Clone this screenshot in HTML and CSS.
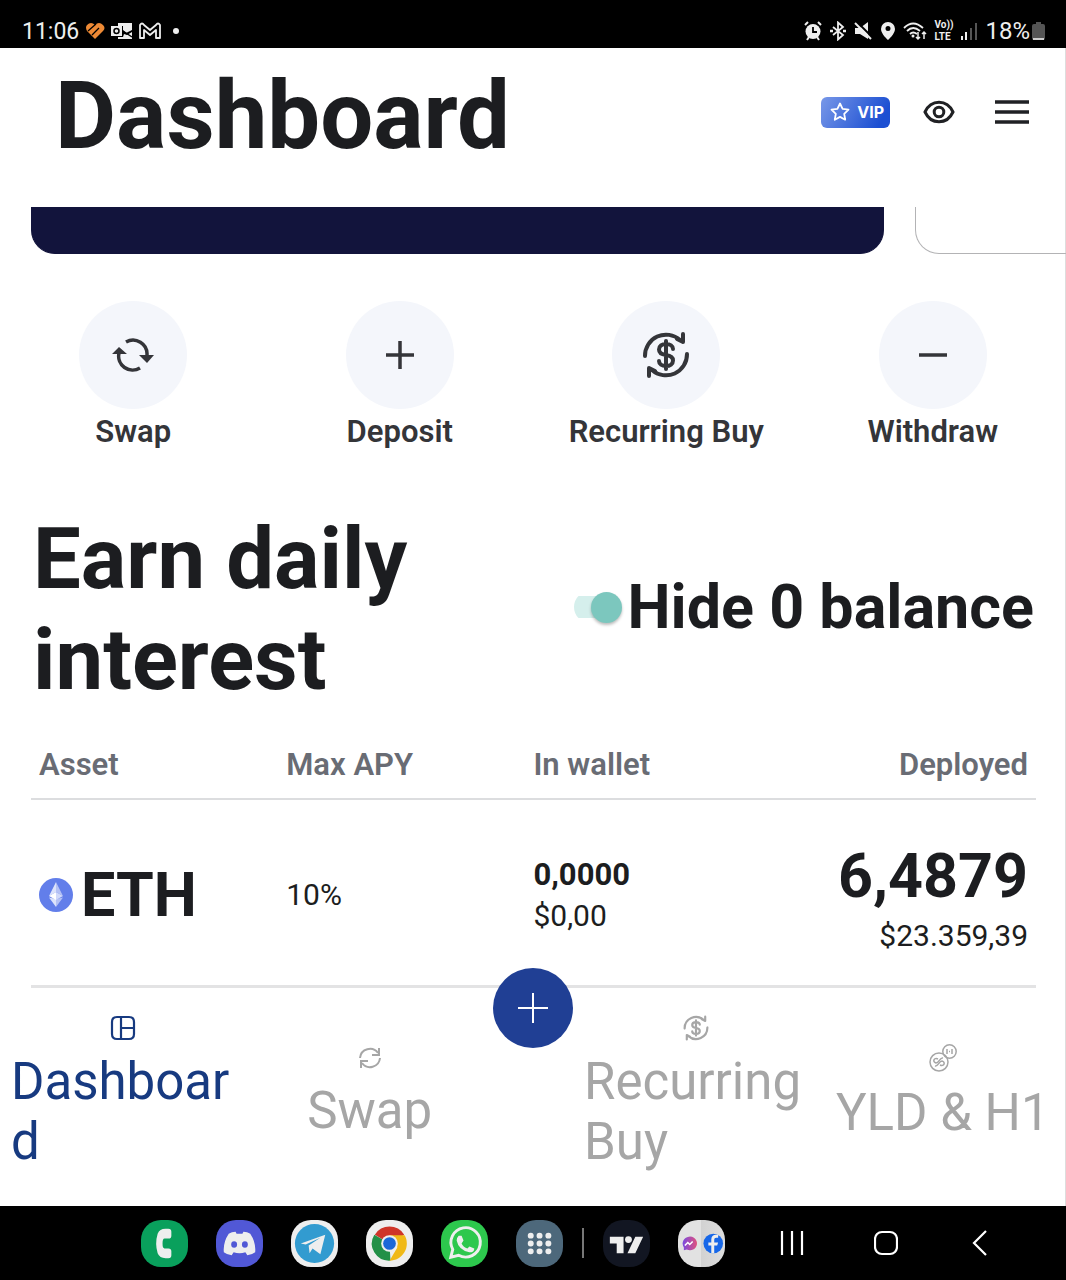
FILE: index.html
```html
<!DOCTYPE html>
<html lang="en">
<head>
<meta charset="utf-8">
<meta name="viewport" content="width=device-width, initial-scale=1">
<title>Dashboard</title>
<link rel="stylesheet" href="styles.css">
</head>
<body>
<svg class="defs" aria-hidden="true">
  <symbol id="recurring" viewBox="0 0 48 48">
    <g fill="none" stroke="currentColor" stroke-linecap="round" stroke-linejoin="round">
      <path d="M3 25A21 21 0 0 1 38 9M41 3v8l-6-3M45 23A21 21 0 0 1 10 39M7 45v-8l6 3"/>
      <path d="M31 18c0-3-3-5-7-5s-7 2-7 5.500 3 5 7 5.500 7 2 7 5.500-3 5.500-7 5.500-7-2-7-5M24 10v28"/>
    </g>
  </symbol>
</svg>

<div class="status">
  <div class="status-group">
    <span class="clock">11:06</span>
    <svg width="20" height="18" viewBox="0 0 20 18"><path fill="#ee8a35" d="M10 17L2 9Q0 5 2 3q4-4 8 0 4-4 8 0 3 3 0 6z"/><path d="M3 9l8-7M7 13l7-7" fill="none" stroke="#000" stroke-width="1.300"/></svg>
    <svg width="22" height="18" viewBox="0 0 22 18"><path fill="#eee" d="M7 1h14v7l-6 3-3-3V4H7zM0 4h11v10H0zM13 12l3 1 5-3v7H7v-2h5z"/><circle cx="5.500" cy="9" r="2.500" fill="none" stroke="#000" stroke-width="1.500"/><path d="M12 9l9 6" stroke="#000" stroke-width="1.500"/></svg>
    <svg width="22" height="18" viewBox="0 0 22 18"><path fill="none" stroke="#eee" stroke-width="1.800" stroke-linejoin="round" d="M1 16V3q2-3 4 0l6 5 6-5q2-3 4 0v13h-4V8l-6 5-6-5v8z"/></svg>
    <span class="dot"></span>
  </div>
  <div class="status-group signals">
    <svg width="18" height="20" viewBox="0 0 18 20"><circle cx="9" cy="10.500" r="7.500" fill="#eee"/><path d="M1 4l3-3M17 4l-3-3M3 19l2-3M15 19l-2-3" stroke="#eee" stroke-width="2"/><path d="M9 6v5h4" fill="none" stroke="#000" stroke-width="1.800"/></svg>
    <svg width="18" height="20" viewBox="0 0 18 20"><path d="M4 6l10 8-5 4.500v-17L14 6 4 14" fill="none" stroke="#eee" stroke-width="1.800"/><path d="M1 10h3M14 10h3" stroke="#eee" stroke-width="2.500"/></svg>
    <svg width="19" height="20" viewBox="0 0 19 20"><path fill="#eee" d="M1 7h5l8-6v17l-8-5H1z"/><path d="M3 1l16 16" stroke="#000" stroke-width="2"/><path d="M1 2l16 16" stroke="#eee" stroke-width="2"/></svg>
    <svg width="16" height="20" viewBox="0 0 16 20"><path fill="#eee" fill-rule="evenodd" d="M8 1a7 7 0 0 1 7 7c0 5-7 11-7 11S1 13 1 8a7 7 0 0 1 7-7zm0 4a2.500 2.500 0 1 0 0 5 2.500 2.500 0 0 0 0-5z"/></svg>
    <svg width="24" height="20" viewBox="0 0 24 20"><g fill="none" stroke="#eee" stroke-width="1.800"><path d="M1 7q9-9 19 0M4 10q6-6 13 0M7 13q3-3 7 0"/><path stroke-width="1.500" d="M15 11v7m-2-2l2 2 2-2M21 18v-7m-2 2l2-2 2 2"/></g><circle cx="10" cy="15" r="1.500" fill="#eee"/></svg>
    <span class="volte"><span>Vo))</span><span>LTE</span></span>
    <svg width="18" height="20" viewBox="0 0 18 20"><path d="M2 15v4M6 11v8" stroke="#eee" stroke-width="2"/><path d="M11 7v12M16 2v17" stroke="#555" stroke-width="2"/></svg>
    <span class="battery">18%<svg width="13" height="20" viewBox="0 0 13 20"><path fill="#555" d="M4 1h5v2h2q2 0 2 2v12q0 2-2 2H2q-2 0-2-2V5q0-2 2-2h2z"/><path d="M1 18h11" stroke="#ccc" stroke-width="2"/></svg></span>
  </div>
</div>

<div class="app">
  <header class="header">
    <h1>Dashboard</h1>
    <div class="tools">
      <a class="vip" href="#vip"><svg width="20" height="20" viewBox="0 0 20 20"><path d="M10 1.500l2.600 5.300 5.900.9-4.300 4.100 1 5.900-5.200-2.800-5.200 2.800 1-5.900L1.500 7.700l5.900-.9z" fill="none" stroke="#fff" stroke-width="1.800" stroke-linejoin="round"/></svg>VIP</a>
      <button class="icon-button" aria-label="Show balances"><svg width="32" height="24" viewBox="0 0 32 24"><path d="M2 12C8-1 24-1 30 12 24 25 8 25 2 12z" fill="none" stroke="#202124" stroke-width="3"/><circle cx="16" cy="12" r="4.800" fill="none" stroke="#202124" stroke-width="3"/></svg></button>
      <button class="icon-button" aria-label="Menu"><svg width="36" height="24" viewBox="0 0 36 24"><path d="M1 2h34M1 12h34M1 22h34" stroke="#202124" stroke-width="3.500"/></svg></button>
    </div>
  </header>

  <div class="carousel"><div class="card card-active"></div><div class="card"></div></div>

  <div class="actions">
    <button class="action"><span class="action-icon"><svg width="42" height="34" viewBox="0 0 42 34"><path d="M14 4a14 14 0 0 1 21 13M28 30A14 14 0 0 1 7 15" fill="none" stroke="currentColor" stroke-width="3.500"/><path fill="currentColor" d="M27 17h15l-7 8zM0 16h15L7 9z"/></svg></span>Swap</button>
    <button class="action"><span class="action-icon"><svg width="28" height="28" viewBox="0 0 28 28"><path d="M0 14h28M14 0v28" stroke="currentColor" stroke-width="3.500"/></svg></span>Deposit</button>
    <button class="action"><span class="action-icon"><svg width="48" height="48" stroke-width="4"><use href="#recurring"/></svg></span>Recurring Buy</button>
    <button class="action"><span class="action-icon"><svg width="28" height="28" viewBox="0 0 28 28"><path d="M0 14h28" stroke="currentColor" stroke-width="3.500"/></svg></span>Withdraw</button>
  </div>

  <main class="earn">
    <div class="earn-head">
      <h2>Earn daily interest</h2>
      <label class="toggle"><input type="checkbox" role="switch" checked>Hide 0 balance</label>
    </div>
    <table>
      <thead><tr><th>Asset</th><th>Max APY</th><th>In wallet</th><th class="end">Deployed</th></tr></thead>
      <tbody>
        <tr>
          <td><span class="asset"><svg width="34" height="34" viewBox="0 0 34 34"><circle cx="17" cy="17" r="17" fill="#627eea"/><path fill="#dce3fb" d="M17 4v10l-7 4zM17 21v8l-7-9.500z"/><path fill="#b4c1f5" d="M17 4l7 14-7-4zM17 21l7-1.500-7 9.500z"/><path fill="#fff" d="M10 18l7-4v8z"/><path fill="#d0d9fa" d="M24 18l-7-4v8z"/></svg>ETH</span></td>
          <td>10%</td>
          <td class="wallet"><strong>0,0000</strong><span>$0,00</span></td>
          <td class="deployed end"><strong>6,4879</strong><span>$23.359,39</span></td>
        </tr>
      </tbody>
    </table>
  </main>

  <nav class="tabs">
    <a class="tab active" href="#dashboard"><svg width="26" height="26" viewBox="0 0 26 26"><path d="M7 2h12q5 0 5 5v12q0 5-5 5H7q-5 0-5-5V7q0-5 5-5zM11 2v22M11 13h13" fill="none" stroke="currentColor" stroke-width="2.200"/></svg><span>Dashboard</span></a>
    <a class="tab" href="#swap"><svg width="24" height="24" viewBox="0 0 24 24"><path d="M2 12a10 10 0 0 1 18-5M21 2v7h-7M22 12a10 10 0 0 1-18 5M3 22v-7h7" fill="none" stroke="currentColor" stroke-width="2"/></svg><span>Swap</span></a>
    <button class="add" aria-label="Add"><svg width="30" height="30" viewBox="0 0 30 30"><path d="M0 15h30M15 0v30" stroke="#fff" stroke-width="2"/></svg></button>
    <a class="tab" href="#recurring-buy"><svg width="26" height="26" stroke-width="4"><use href="#recurring"/></svg><span>Recurring Buy</span></a>
    <a class="tab" href="#yld"><svg width="28" height="28" viewBox="0 0 28 28"><g fill="none" stroke="currentColor" stroke-width="1.500"><circle cx="10" cy="18" r="9"/><circle cx="20.500" cy="7.500" r="6.700"/><path d="M9 15c-4-2-6 3-2 4 3 0 4-6 7-5M11 21c4 2 6-3 2-4-3 0-4 6-7 5M18 5v5M23 5v5M20 7.500h1"/></g></svg><span>YLD &amp; H1</span></a>
  </nav>
</div>

<footer class="dock">
  <div class="apps">
    <button class="app-icon phone" aria-label="Phone"><svg viewBox="0 0 48 48"><path fill="#eee" d="M17 14q2-5 8-5h3q3 0 3 3v4q0 3-3 3h-4q-2 0-2 5t2 5h4q3 0 3 3v4q0 3-3 3h-3q-6 0-8-5-3-10 0-20z"/></svg></button>
    <button class="app-icon discord" aria-label="Discord"><svg viewBox="0 0 48 48"><path fill="#eee" d="M13 14q3-2 7-2l1 2h6l1-2q4 0 7 2 6 9 5 19-4 3-8 3l-2-3q-6 2-12 0l-2 3q-4 0-8-3-1-10 5-19z"/><ellipse cx="18.500" cy="25" rx="3" ry="3.300" fill="#5158d6"/><ellipse cx="29.500" cy="25" rx="3" ry="3.300" fill="#5158d6"/></svg></button>
    <button class="app-icon light" aria-label="Telegram"><svg viewBox="0 0 48 48"><circle cx="24" cy="24" r="20" fill="#329bd0"/><path fill="#eee" d="M10 24l25-9-5 20-8-6-3 5-1-8 12-8-15 7z"/></svg></button>
    <button class="app-icon light" aria-label="Chrome"><svg viewBox="0 0 48 48"><path fill="#cf3529" d="M24 24L9 15a17.500 17.500 0 0 1 30 0z"/><path fill="#239047" d="M24 24l1 17.500A17.500 17.500 0 0 1 8.500 15z"/><path fill="#f0b918" d="M24 15.500h15.500A17.500 17.500 0 0 1 24 41.500L32 28z"/><circle cx="24" cy="24" r="8.500" fill="#eee"/><circle cx="24" cy="24" r="6.500" fill="#1b67d8"/></svg></button>
    <button class="app-icon whatsapp" aria-label="WhatsApp"><svg viewBox="0 0 48 48"><path d="M10 38l2-8a15 15 0 1 1 6 6z" fill="none" stroke="#eee" stroke-width="3"/><path fill="#eee" d="M18 16h3l2 5-2 3q2 4 6 5l2-2 5 2q0 4-5 4-11-2-13-12 0-3 2-5z"/></svg></button>
    <button class="app-icon drawer" aria-label="All apps"><svg viewBox="0 0 48 48"><path d="M15 16h.1M24 16h.1M33 16h.1M15 24h.1M24 24h.1M33 24h.1M15 32h.1M24 32h.1M33 32h.1" stroke="#eee" stroke-width="6" stroke-linecap="round"/></svg></button>
  </div>
  <span class="divider"></span>
  <div class="apps">
    <button class="app-icon trading" aria-label="TradingView"><svg viewBox="0 0 48 48"><path fill="#eee" d="M7 17h14v17h-7V24H7zM33 17h8l-8 17h-8z"/><circle cx="26" cy="20" r="3.500" fill="#eee"/></svg></button>
    <button class="app-icon pair" aria-label="Messenger and Facebook"><svg viewBox="0 0 48 48"><defs><linearGradient id="msg" x2="1"><stop stop-color="#7a4be0"/><stop offset="1" stop-color="#e0507c"/></linearGradient></defs><path fill="url(#msg)" d="M11 17a7 7 0 1 1-2 13l-3 1v-3a7 7 0 0 1 5-11z"/><path d="M7 26l3-3 2 2 3-3" fill="none" stroke="#fff" stroke-width="1.600"/><circle cx="36" cy="24" r="10" fill="#1767e8"/><path fill="#eee" d="M34 34v-8h-3v-3h3v-3q0-5 5-5h2v3h-2q-2 0-2 2v3h4l-1 3h-3v8z"/></svg></button>
  </div>
  <div class="system">
    <button aria-label="Recent apps"><svg width="24" height="26" viewBox="0 0 24 26"><path d="M2 1v24M12 1v24M22 1v24" stroke="#fff" stroke-width="2.200"/></svg></button>
    <button aria-label="Home"><svg width="24" height="26" viewBox="0 0 24 26"><rect x="1" y="2" width="22" height="22" rx="7" fill="none" stroke="#fff" stroke-width="2.200"/></svg></button>
    <button aria-label="Back"><svg width="24" height="26" viewBox="0 0 24 26"><path d="M18 1L6 13l12 12" fill="none" stroke="#fff" stroke-width="2.200"/></svg></button>
  </div>
</footer>
</body>
</html>
```
FILE: styles.css
```css
* { box-sizing: border-box; }
body {
  margin: 0;
  min-height: 100vh;
  display: flex;
  flex-direction: column;
  font-family: Roboto, "Liberation Sans", sans-serif;
  color: #1c1d20;
  background: #fff;
}
svg { display: block; flex: none; }
h1, h2 { margin: 0; font-weight: 700; }
button {
  margin: 0;
  padding: 0;
  border: 0;
  background: none;
  font: inherit;
  color: inherit;
  cursor: pointer;
}
a { color: inherit; text-decoration: none; }
.defs { position: absolute; width: 0; height: 0; }

.status {
  display: flex;
  justify-content: space-between;
  height: 48px;
  padding: 14px 21px 0 22px;
  background: #000;
  color: #eee;
}
.status-group { display: flex; align-items: center; gap: 6px; height: 34px; font-size: 23px; }
.signals { gap: 7px; font-size: 24px; }
.dot { width: 6px; height: 6px; margin-left: 6px; border-radius: 50%; background: #eee; }
.volte { display: grid; font-size: 10px; line-height: 12px; font-weight: 700; }
.battery { display: flex; align-items: center; gap: 2px; }

.app {
  flex: 1;
  display: flex;
  flex-direction: column;
  box-shadow: inset -1px 0 #ddd;
  overflow: hidden;
}
.header {
  display: flex;
  justify-content: space-between;
  padding: 12px 36px 34px 55px;
}
h1 { font-size: 94px; line-height: 113px; }
.tools { display: flex; align-items: center; height: 104px; }
.vip {
  display: flex;
  align-items: center;
  gap: 7px;
  height: 31px;
  padding: 0 6px 0 9px;
  border-radius: 6px;
  background: linear-gradient(120deg, #7898e8, #1c4fd2 85%);
  color: #fff;
  font: 700 16px Inter, sans-serif;
}
.icon-button { margin-left: 33px; }
.icon-button + .icon-button { margin-left: 39px; }

.carousel { display: flex; gap: 31px; padding-left: 31px; }
.card {
  flex: 0 0 80vw;
  height: 47px;
  border: 1px solid #b3b3b5;
  border-top: 0;
  border-radius: 0 0 24px 24px;
}
.card-active { border-color: #12143c; background: #12143c; }

.actions { display: grid; grid-template-columns: repeat(4, 1fr); padding-top: 47px; }
.action {
  display: flex;
  flex-direction: column;
  align-items: center;
  gap: 5px;
  color: #343539;
  font-size: 31px;
  font-weight: 600;
  line-height: 36px;
}
.action-icon {
  display: grid;
  place-items: center;
  width: 108px;
  height: 108px;
  border-radius: 50%;
  background: #f4f6fb;
}

.earn { padding: 59px 30px 0 31px; }
.earn-head { display: flex; align-items: center; justify-content: space-between; padding: 0 2px; }
h2 { flex: 0 1 400px; font-size: 85px; line-height: 101px; }
.toggle {
  display: flex;
  align-items: center;
  gap: 6px;
  padding-bottom: 6px;
  font-size: 61px;
  font-weight: 700;
  white-space: nowrap;
}
.toggle input {
  appearance: none;
  display: flex;
  align-items: center;
  justify-content: flex-end;
  width: 48px;
  height: 32px;
  margin: 0;
  background: linear-gradient(#d5efec, #d5efec) left center / 40px 22px no-repeat;
  border-radius: 16px;
}
.toggle input::before {
  content: "";
  width: 31px;
  height: 31px;
  border-radius: 50%;
  background: #7cc7be;
  box-shadow: 0 2px 3px #0004;
}

table {
  width: 100%;
  margin-top: 20px;
  table-layout: fixed;
  border-collapse: collapse;
  font-size: 30px;
}
th, td { padding: 16px 8px 15px; text-align: left; border-bottom: 2px solid #dcdddf; }
th { width: 24.600%; font-size: 31px; line-height: 36px; font-weight: 600; color: #696c74; }
th.end { width: auto; }
td {
  height: 187px;
  padding: 20px 8px 15px;
  border-bottom: 3px solid #e3e3e4;
  vertical-align: middle;
  line-height: 41px;
}
.end, th.end { text-align: right; }
td strong, td strong + span { display: block; }
td strong { font-size: 31px; }
.asset { display: flex; align-items: center; gap: 8px; font-size: 61px; font-weight: 700; line-height: 72px; }
.deployed { padding-top: 23px; }
.deployed strong { font-size: 61px; line-height: 78px; }

.tabs {
  flex: 1;
  display: grid;
  grid-template-columns: 1fr 1fr 80px 1fr 1fr;
  align-items: center;
  padding-bottom: 6px;
  color: #a6a6a6;
  font-size: 51px;
  line-height: 60px;
}
.tab {
  display: flex;
  flex-direction: column;
  align-items: center;
  gap: 11px;
  padding: 0 11px;
  overflow-wrap: anywhere;
}
.active { color: #173a80; }
.add {
  align-self: start;
  display: grid;
  place-items: center;
  width: 80px;
  height: 80px;
  margin-top: -20px;
  border-radius: 50%;
  background: #203f94;
}

.dock { display: flex; align-items: center; height: 74px; padding: 0 74px 0 141px; background: #000; }
.apps { display: flex; gap: 28px; }
.app-icon { width: 47px; height: 47px; border-radius: 20px; overflow: hidden; }
.phone { background: #09a05c; }
.discord { background: #5158d6; }
.light { background: #eee; }
.whatsapp { background: #2dc84d; }
.drawer { background: #4d687b; }
.trading { background: #121622; }
.pair { background: linear-gradient(90deg, #e2e2e2 48%, #d2d2d2 50%, #dedede); }
.divider { width: 2px; height: 30px; margin: 0 19px; background: #777; }
.system { display: flex; gap: 70px; margin-left: auto; }
```
